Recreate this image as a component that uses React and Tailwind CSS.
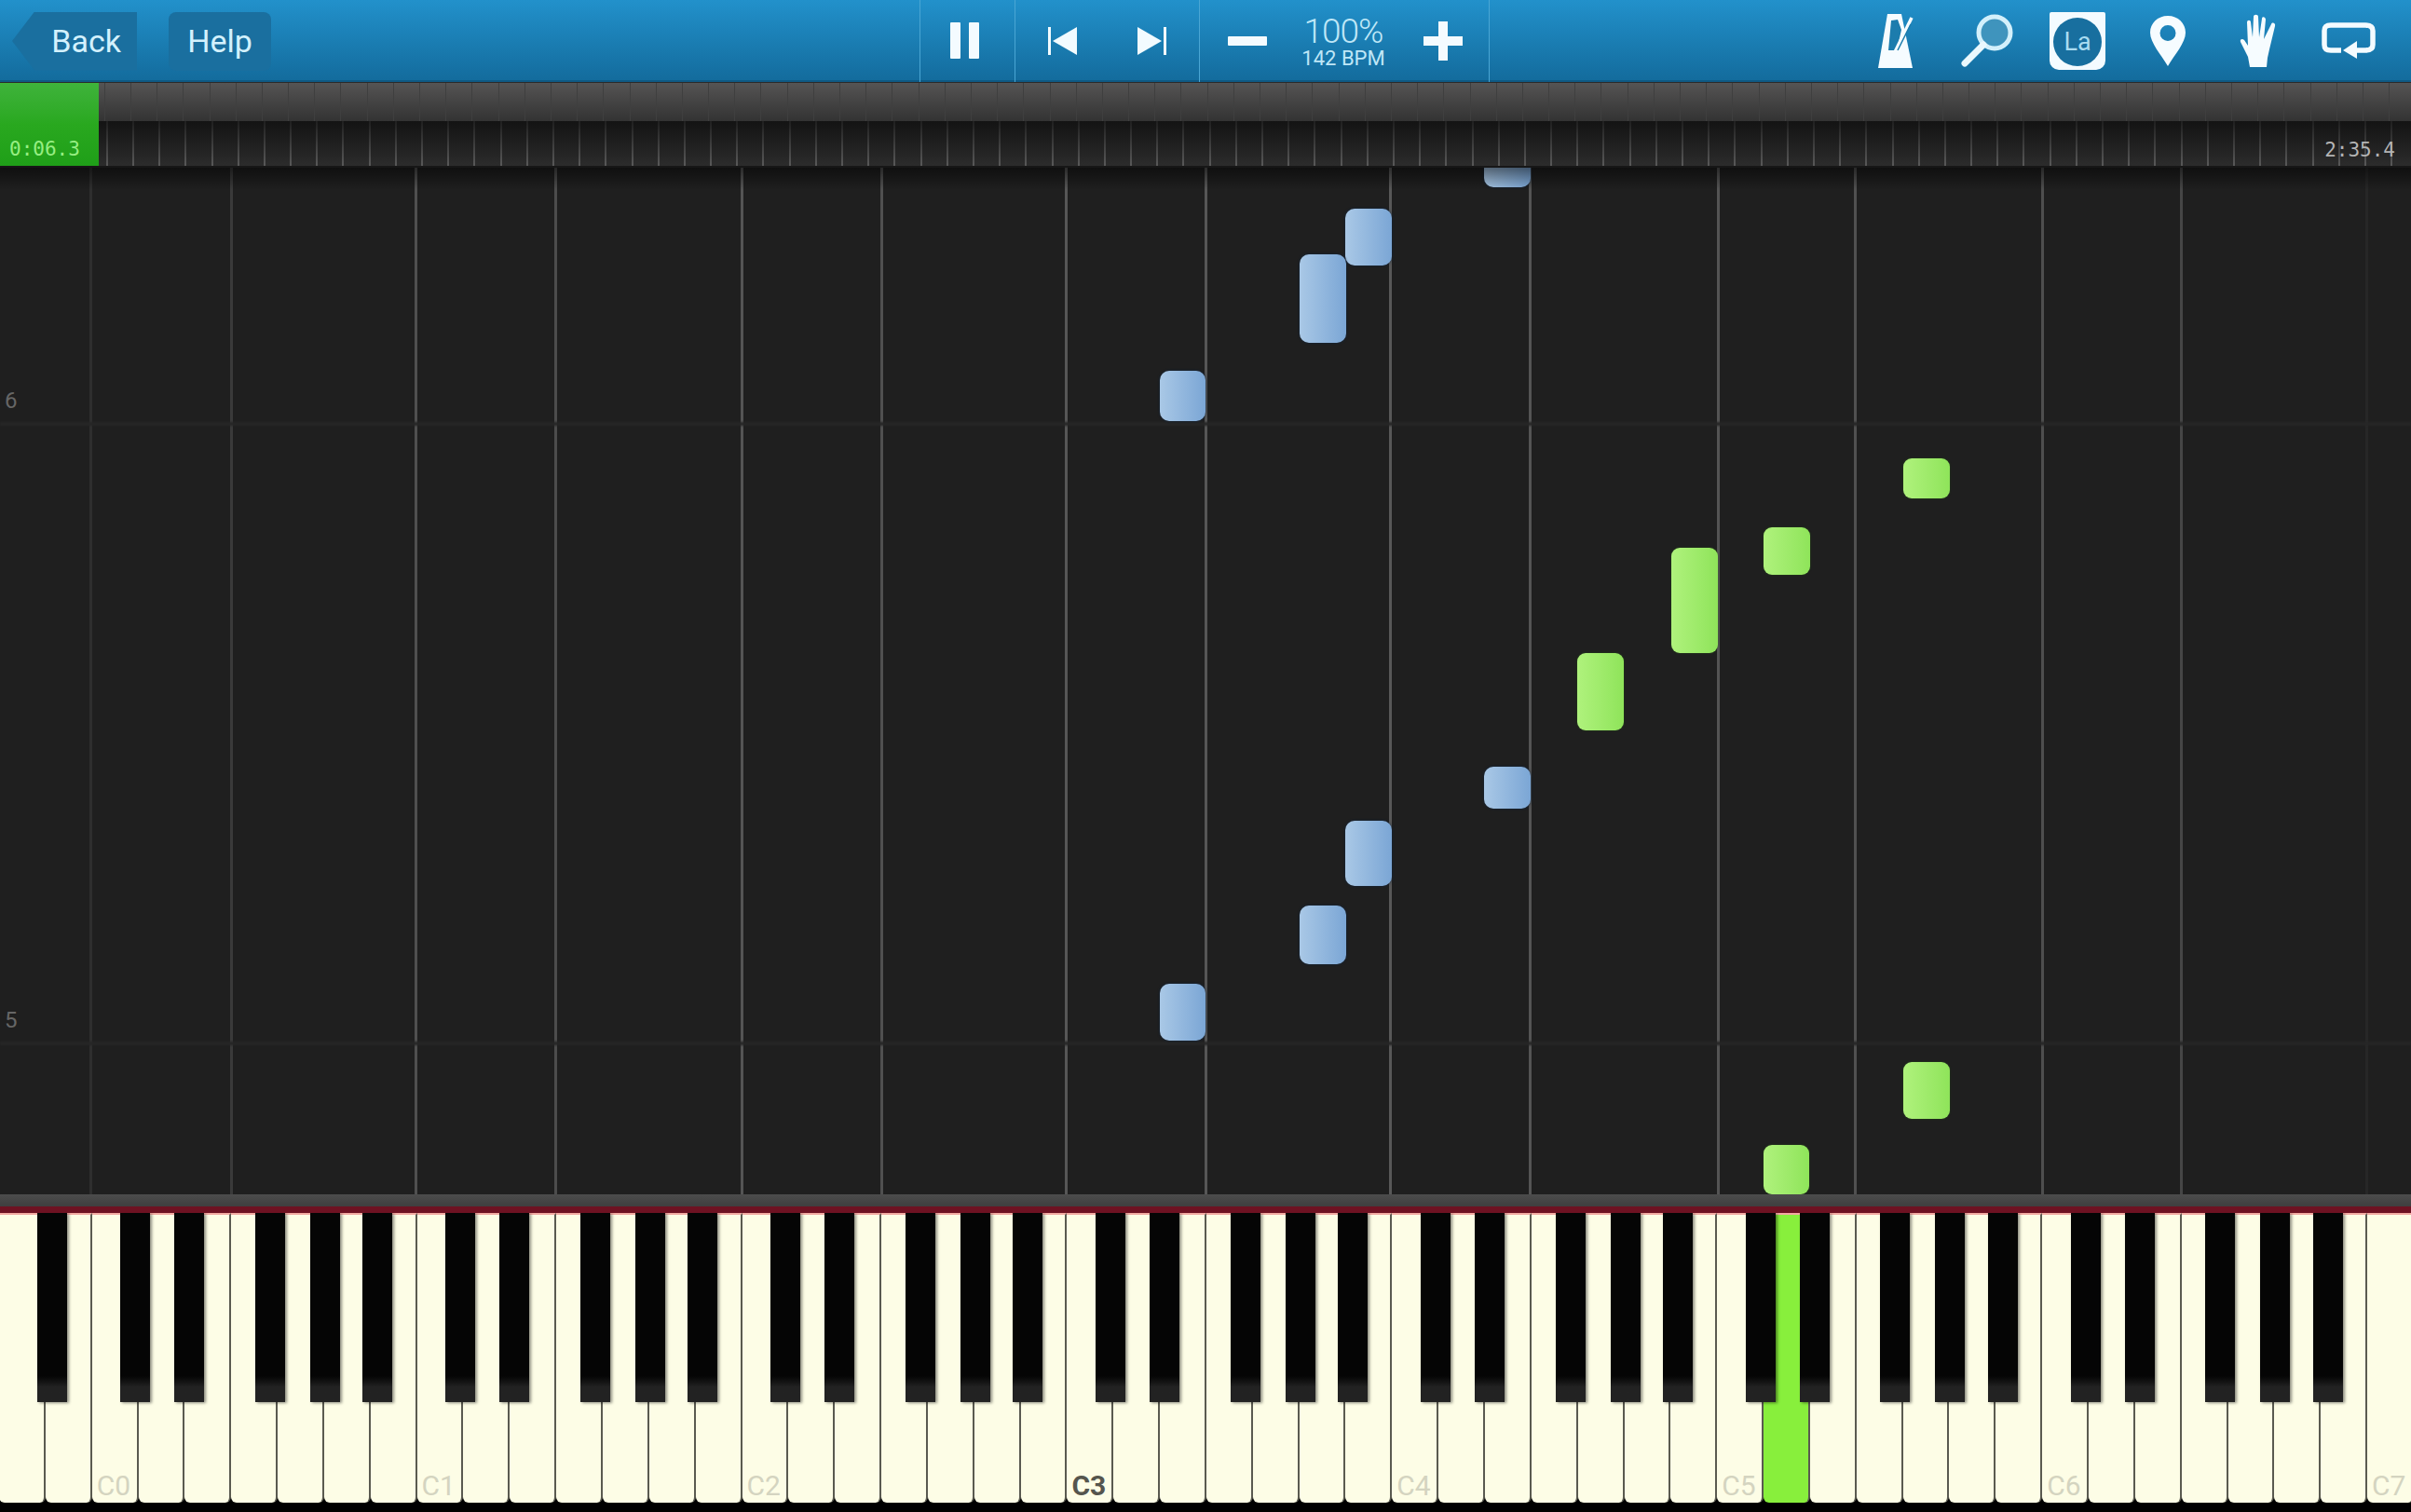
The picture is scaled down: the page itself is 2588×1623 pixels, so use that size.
import React from "react";

const KEY_W = 49.85;
const OCTAVE = KEY_W * 7;
const C0_X = 98.7;

// white keys: A, B below C0, then the octaves
const whiteKeys = Array.from({ length: 53 }, (_, i) => {
  const n = i - 2;
  return { label: n >= 0 && n % 7 === 0 ? "C" + n / 7 : null, bold: n === 21, active: i === 38 };
});

// black key centres inside one octave, measured from its C
const BLACK_OFFSETS = [46.5, 104.5, 191, 250, 306.5];
const blackKeys = [];
for (let o = -1; o < 7; o++) {
  BLACK_OFFSETS.forEach((off) => {
    const x = C0_X + o * OCTAVE + off;
    if (x > 30 && x < 2530) blackKeys.push(x);
  });
}

const gridLines = [
  [96, "bg-[#2e2e2e]"],
  [247, "bg-[#3a3a3a]"],
  [445, "bg-[#505050]"],
  [595, "bg-[#4c4c4c]"],
  [795, "bg-[#545454]"],
  [945, "bg-[#505050]"],
  [1143, "bg-[#565656]"],
  [1293, "bg-[#565656]"],
  [1491, "bg-[#585858]"],
  [1641, "bg-[#545454]"],
  [1843, "bg-[#545454]"],
  [1990, "bg-[#505050]"],
  [2191, "bg-[#4e4e4e]"],
  [2340, "bg-[#464646]"],
  [2539, "bg-[#272727]"],
];

const blueNotes = [
  [1593, 170, 50, 31],
  [1444, 224, 50, 61],
  [1395, 273, 50, 95],
  [1245, 398, 49, 54],
  [1593, 823, 50, 45],
  [1444, 881, 50, 70],
  [1395, 972, 50, 63],
  [1245, 1056, 49, 61],
];

const greenNotes = [
  [2043, 492, 50, 43],
  [1893, 566, 50, 51],
  [1794, 588, 50, 113],
  [1693, 701, 50, 83],
  [2043, 1140, 50, 61],
  [1893, 1229, 49, 53],
];

const ticks = Array.from({ length: 92 });

function Separator() {
  return <div className="w-px self-stretch bg-[#4aa6d4]" />;
}

function PauseIcon() {
  return (
    <svg width="32" height="40" viewBox="0 0 32 40" fill="#f4fbff">
      <rect x="0" y="0" width="11" height="39" rx="1" />
      <rect x="20" y="0" width="11" height="39" rx="1" />
    </svg>
  );
}

function PrevIcon({ flip }) {
  return (
    <svg width="32" height="30" viewBox="0 0 32 30" fill="#f2fbff" className={flip ? "-scale-x-100" : ""}>
      <rect x="0" y="0" width="3" height="30" />
      <path d="M31 0V30L5 15Z" />
    </svg>
  );
}

function MetronomeIcon() {
  return (
    <svg width="40" height="60" viewBox="0 0 40 60">
      <path d="M11 1H26L38 59H1Z" fill="#f6fcff" />
      <path d="M15 8L22 7 26 18 21 40H12Z" fill="#1c7cad" />
      <path d="M17 46L37 5" stroke="#f6fcff" strokeWidth="3.5" fill="none" />
      <path d="M22 40L36 12" stroke="#1c7cad" strokeWidth="1.5" fill="none" />
    </svg>
  );
}

function MagnifierIcon() {
  return (
    <svg width="58" height="58" viewBox="0 0 58 58" fill="none">
      <circle cx="37" cy="20" r="17" fill="#3f94bd" stroke="#d3f0fb" strokeWidth="5" />
      <path d="M25 33L5 53" stroke="#eaf8fd" strokeWidth="7" strokeLinecap="round" />
    </svg>
  );
}

function LaIcon() {
  return (
    <div className="flex h-[62px] w-[60px] items-end justify-center rounded-b-[10px] rounded-t-[2px] bg-[#f4fbff] pb-[4px]">
      <div className="flex h-[52px] w-[52px] items-center justify-center rounded-full bg-[#186f9f] text-[27px] text-[#a9dcf1] [font-family:Roboto,sans-serif]">
        La
      </div>
    </div>
  );
}

function PinIcon() {
  return (
    <svg width="38" height="54" viewBox="0 0 38 54">
      <path
        fillRule="evenodd"
        d="M19 0C8 0 0 8 0 18C0 29 12 42 19 54C26 42 38 29 38 18C38 8 30 0 19 0ZM19 10A8.500 8.500 0 1 1 19 27A8.500 8.500 0 1 1 19 10Z"
        fill="#f6fcff"
      />
    </svg>
  );
}

function HandIcon() {
  return (
    <svg width="40" height="58" viewBox="0 0 40 58" fill="#f6fcff">
      <path d="M11 57L9 46 1 30C0 27 3 26 5 28L9 34 8 9C8 6 12 6 12 9L14 25 15 3C15 0 20 0 20 3L21 25 24 5C24 2 28 3 28 6L26 27 34 11C35 8 39 10 38 13L32 38 30 47 29 57Z" />
    </svg>
  );
}

function LoopIcon() {
  return (
    <svg width="58" height="40" viewBox="0 0 58 40" fill="none">
      <path d="M21 30H10C5 30 3 28 3 24V9C3 5 5 3 10 3H47C52 3 55 5 55 9V24C55 28 52 30 47 30H36" stroke="#f4fbff" strokeWidth="5.500" />
      <path d="M23 30L38 20V39Z" fill="#f4fbff" />
    </svg>
  );
}

function Toolbar() {
  return (
    <div className="flex h-[88px] items-stretch bg-gradient-to-b from-[#2291cb] to-[#136b9c] shadow-[inset_0_-2px_0_#0f5a85]">
      <div className="flex items-center pl-[13px] text-[34px] leading-none text-[#d3f1fd] [font-family:Roboto,sans-serif]">
        <div className="flex h-[63px] w-[134px] items-center justify-end pr-[17px] bg-[#1a6f9f] [clip-path:polygon(24px_0,100%_0,100%_100%,24px_100%,0_50%)]">
          Back
        </div>
        <div className="ml-[34px] flex h-[63px] w-[110px] items-center justify-center rounded-[8px] bg-[#1a6f9f]">
          Help
        </div>
      </div>

      <div className="ml-[696px] flex items-stretch">
        <Separator />
        <div className="flex w-[101px] items-center justify-center pr-[5px]">
          <PauseIcon />
        </div>
        <Separator />
        <div className="flex w-[197px] items-center justify-between px-[35px]">
          <PrevIcon />
          <PrevIcon flip />
        </div>
        <Separator />
        <div className="flex w-[310px] items-center pl-[30px] text-[#bfe7f7] [font-family:Roboto,sans-serif]">
          <div className="h-[10px] w-[42px] shrink-0 rounded-[1px] bg-[#f4fbff]" />
          <div className="ml-[38px] mr-[2px] flex w-[88px] shrink-0 flex-col items-center whitespace-nowrap">
            <div className="text-[37px] font-light leading-[38px] tracking-[-1px]">100%</div>
            <div className="text-[22px] leading-[20px]">142 BPM</div>
          </div>
          <div className="relative ml-[40px] h-[42px] w-[42px] shrink-0">
            <div className="absolute left-0 top-[16px] h-[10px] w-[42px] bg-[#f4fbff]" />
            <div className="absolute left-[16px] top-0 h-[42px] w-[10px] bg-[#f4fbff]" />
          </div>
        </div>
        <Separator />
      </div>

      <div className="ml-auto flex items-center pr-[38px]">
        <MetronomeIcon />
        <div className="ml-[49px]">
          <MagnifierIcon />
        </div>
        <div className="ml-[38px]">
          <LaIcon />
        </div>
        <div className="ml-[48px]">
          <PinIcon />
        </div>
        <div className="ml-[58px]">
          <HandIcon />
        </div>
        <div className="ml-[48px]">
          <LoopIcon />
        </div>
      </div>
    </div>
  );
}

function Timeline() {
  return (
    <div className="relative h-[92px] overflow-hidden border-t border-[#2a2a2a] bg-[#171717]">
      <div className="flex h-[41px] bg-gradient-to-b from-[#555454] to-[#333333]">
        {ticks.map((_, i) => (
          <div key={i} className="w-[28.2px] shrink-0 border-r border-[#3f3f3f]" />
        ))}
      </div>
      <div className="flex h-[48px] bg-gradient-to-b from-[#131313] to-[#2c2c2c] pl-[3px]">
        {ticks.map((_, i) => (
          <div
            key={i}
            className="w-[28.2px] shrink-0 border-r-2 border-[#484848] [border-image:linear-gradient(to_bottom,#1e1e1e,#5a5a5a)_1]"
          />
        ))}
      </div>
      <div className="absolute left-0 top-0 flex h-[89px] w-[106px] items-end bg-gradient-to-b from-[#3fb33b] via-[#29a81f] to-[#1f9f18] pb-[6px] pl-[10px] text-[21px] leading-[24px] text-[#96ee82] [font-family:'DejaVu_Sans_Mono',monospace]">
        0:06.3
      </div>
      <div className="absolute right-[17px] top-[60px] text-[21px] leading-[24px] text-[#b4b4b4] [font-family:'DejaVu_Sans_Mono',monospace]">
        2:35.4
      </div>
    </div>
  );
}

function Note({ note, green }) {
  const [x, y, w, h] = note;
  return (
    <div
      className={
        green
          ? "absolute rounded-[9px] bg-gradient-to-r from-[#aff27c] to-[#8fe45a] shadow-[0_0_2px_#27501a]"
          : "absolute rounded-[10px] bg-gradient-to-r from-[#a9c8e6] to-[#7ba6d5] shadow-[0_0_3px_#10253f]"
      }
      style={{ left: x, top: y - 180, width: w, height: h }}
    />
  );
}

function NoteField() {
  return (
    <div className="relative h-[1102px] overflow-hidden bg-[#1f1f1f]">
      {gridLines.map(([x, tone]) => (
        <div key={x} className={"absolute inset-y-0 w-[3px] blur-[0.5px] " + tone} style={{ left: x }} />
      ))}
      <div className="absolute inset-x-0 top-[273px] h-[4px] bg-[#262626] blur-[1px]" />
      <div className="absolute inset-x-0 top-[938px] h-[4px] bg-[#262626] blur-[1px]" />
      <div className="absolute left-[5px] top-[236px] text-[24px] leading-[28px] text-[#666666] [font-family:Roboto,sans-serif]">6</div>
      <div className="absolute left-[5px] top-[901px] text-[24px] leading-[28px] text-[#666666] [font-family:Roboto,sans-serif]">5</div>
      {blueNotes.map((n, i) => (
        <Note key={i} note={n} />
      ))}
      {greenNotes.map((n, i) => (
        <Note key={i} note={n} green />
      ))}
      <div className="absolute inset-x-0 top-0 h-[24px] bg-gradient-to-b from-black/50 to-transparent" />
    </div>
  );
}

function Keyboard() {
  return (
    <div className="relative overflow-hidden">
      <div className="h-[13px] bg-gradient-to-b from-[#4c4c4c] to-[#3f3f3f]" />
      <div className="h-[7px] bg-[#6e1222]" />
      <div className="relative h-[321px] overflow-hidden bg-black">
        <div className="ml-[-1px] flex h-[311px] w-[2650px]">
          {whiteKeys.map((k, i) => (
            <div
              key={i}
              className={
                "relative w-[49.85px] shrink-0 rounded-b-[6px] border-r-2 border-t-2 border-r-[#5a5a50] border-t-[#f2aaa2] " +
                (k.active ? "bg-[#88ef3c]" : "bg-[#fdfde6]")
              }
            >
              {k.label && (
                <div
                  className={
                    "absolute bottom-[1px] left-[5px] text-[30px] leading-[34px] [font-family:Roboto,sans-serif] " +
                    (k.bold ? "font-bold text-[#55554d]" : "text-[#d4d4c0]")
                  }
                >
                  {k.label}
                </div>
              )}
            </div>
          ))}
        </div>
        {blackKeys.map((x, i) => (
          <div
            key={i}
            className="absolute top-0 h-[203px] w-[32px] bg-gradient-to-b from-[#050505] from-[86%] to-[#222222] to-[92%] shadow-[2px_1px_3px_rgba(0,0,0,0.45)]"
            style={{ left: x - 16 }}
          />
        ))}
      </div>
    </div>
  );
}

export default function App() {
  return (
    <div className="h-[1623px] w-[2588px] overflow-hidden bg-black">
      <Toolbar />
      <Timeline />
      <NoteField />
      <Keyboard />
    </div>
  );
}
